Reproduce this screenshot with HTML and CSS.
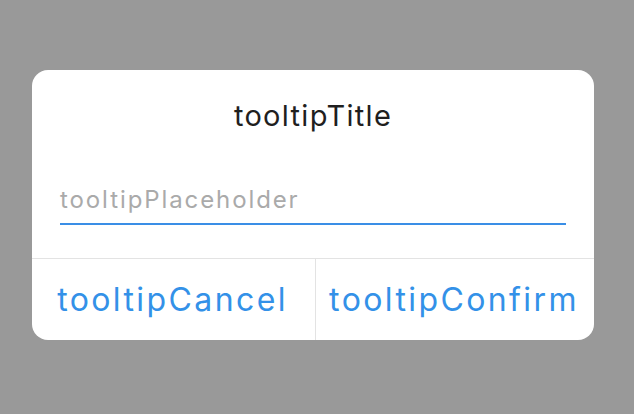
FILE: index.html
```html
<!DOCTYPE html>
<html>
<head>
<meta charset="utf-8">
<link rel="stylesheet" href="styles.css">
</head>
<body>
<div class="page">
  <div class="dialog">
    <div class="title">tooltipTitle</div>
    <div class="field">
      <div class="placeholder">tooltipPlaceholder</div>
    </div>
    <div class="actions">
      <div class="btn btn-cancel">tooltipCancel</div>
      <div class="btn btn-confirm">tooltipConfirm</div>
    </div>
  </div>
</div>
</body>
</html>
```
FILE: styles.css
```css
html, body {
  margin: 0;
  padding: 0;
  background: #999999;
  font-family: Inter, "Noto Sans", sans-serif;
}
.page {
  width: 634px;
  height: 414px;
  padding: 70px 40px 0 32px;
  box-sizing: border-box;
}
.dialog {
  width: 562px;
  height: 270px;
  background: #ffffff;
  border-radius: 16px;
  display: flex;
  flex-direction: column;
  overflow: hidden;
}
.title {
  height: 92px;
  line-height: 92px;
  text-align: center;
  font-size: 29px;
  letter-spacing: 1.3px;
  color: #1f1f1f;
}
.field {
  margin: 0 28px;
  height: 63px;
  display: flex;
  align-items: center;
  border-bottom: 2px solid #3a8ee6;
  box-sizing: border-box;
  padding-top: 14px;
}
.placeholder {
  font-size: 24px;
  letter-spacing: 1.9px;
  color: #aaaaaa;
}
.actions {
  margin-top: 33px;
  border-top: 1px solid #e3e3e3;
  display: flex;
  flex: 1;
}
.btn {
  display: flex;
  align-items: center;
  justify-content: center;
  font-size: 32px;
  letter-spacing: 2.4px;
  color: #3391e8;
}
.btn-cancel {
  width: 283px;
  padding-right: 2px;
  box-sizing: border-box;
}
.btn-confirm {
  flex: 1;
  padding-right: 2px;
  border-left: 1px solid #e3e3e3;
}
```
